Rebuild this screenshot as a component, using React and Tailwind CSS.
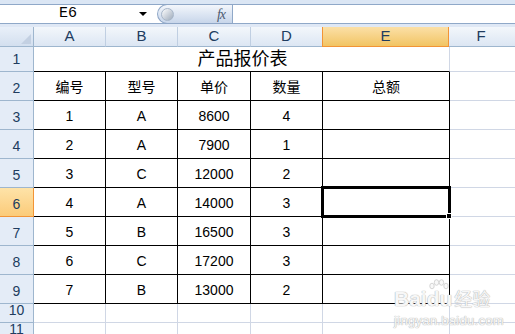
const COLS = [
  {key: 'A', w: 'w-[72px]'},
  {key: 'B', w: 'w-[72px]'},
  {key: 'C', w: 'w-[73px]'},
  {key: 'D', w: 'w-[72px]'},
  {key: 'E', w: 'w-[127px]'},
];

const DATA = [
  ['编号', '型号', '单价', '数量', '总额'],
  ['1', 'A', '8600', '4', ''],
  ['2', 'A', '7900', '1', ''],
  ['3', 'C', '12000', '2', ''],
  ['4', 'A', '14000', '3', ''],
  ['5', 'B', '16500', '3', ''],
  ['6', 'C', '17200', '3', ''],
  ['7', 'B', '13000', '2', ''],
];

const RowHeader = ({n, active, h}) => (
  <div
    className={`${h} w-[34px] shrink-0 flex items-end justify-center pb-[1px] border-r border-b text-[14px] text-[#203c5f] ${
      active
        ? 'bg-gradient-to-b from-[#fee3a8] to-[#fbcb79] border-[#f29436]'
        : 'bg-[#e4ecf7] border-[#9eb6ce]'
    }`}
  >
    {n}
  </div>
);

const Paw = () => (
  <svg width="22" height="12" viewBox="0 0 22 12" className="absolute left-[1px] -top-[9px]">
    <g fill="#f8f8f8" stroke="#d0d0d0" strokeWidth="0.9">
      <ellipse cx="4" cy="7" rx="2.2" ry="2.8"/>
      <ellipse cx="8.5" cy="3.5" rx="2.2" ry="2.8"/>
      <ellipse cx="13.5" cy="3.5" rx="2.2" ry="2.8"/>
      <ellipse cx="18" cy="7" rx="2.2" ry="2.8"/>
    </g>
  </svg>
);

export default function App() {
  return (
    <div className="relative w-[515px] h-[334px] overflow-hidden bg-white font-['Liberation_Sans','Noto_Sans_CJK_SC',sans-serif]">
      {/* top strip */}
      <div className="h-[4px] bg-[#dbe6f4]"/>

      {/* formula bar */}
      <div className="h-[20px] flex border-y border-[#8fa8c8] bg-white">
        <div className="w-[157px] shrink-0 flex items-center">
          <span className="w-[136px] text-center text-[15px] text-black font-['Liberation_Mono',monospace]">E6</span>
          <span className="ml-[3px] w-0 h-0 border-x-[4px] border-x-transparent border-t-[4px] border-t-black"/>
        </div>
        <div className="w-[75px] shrink-0 -my-[1px] flex items-center justify-between rounded-l-full border border-r-0 border-[#8ea6c6] bg-gradient-to-b from-[#f3f6fb] via-[#dde6f3] to-[#c8d6ea] pl-[3px] pr-[7px]">
          <span className="w-[13px] h-[13px] rounded-full bg-gradient-to-br from-[#ffffff] to-[#9eabbb] border border-[#a7b6c9]"/>
          <span className="italic text-[14px] text-[#4d5b70] font-['Liberation_Serif',serif] tracking-[-1px]">fx</span>
        </div>
        <div className="flex-1 border-l border-[#8fa8c8]"/>
      </div>

      {/* gap */}
      <div className="h-[3px] bg-[#dfe8f5]"/>

      {/* column header */}
      <div className="flex h-[20px]">
        <div className="relative w-[34px] shrink-0 border-r border-b border-[#9eb6ce] bg-gradient-to-b from-[#e9f0f9] to-[#d3dfef]">
          <span className="absolute right-[2px] bottom-[2px] w-0 h-0 border-l-[10px] border-l-transparent border-b-[10px] border-b-[#c3d0e2]"/>
        </div>
        {COLS.map(c => (
          <div
            key={c.key}
            className={`${c.w} shrink-0 flex items-center justify-center border-r border-b text-[15px] text-[#203c5f] ${
              c.key === 'E'
                ? 'bg-gradient-to-b from-[#fbe0a6] to-[#f2c462] border-[#f29436] border-l border-l-[#f29436] -ml-[1px]'
                : 'bg-gradient-to-b from-[#f3f7fb] to-[#dce6f3] border-[#c0cfe2] border-b-[#9eb6ce]'
            }`}
          >
            {c.key}
          </div>
        ))}
        <div className="flex-1 flex items-center justify-center pr-[2px] border-b border-[#9eb6ce] bg-gradient-to-b from-[#f3f7fb] to-[#dce6f3] text-[15px] text-[#203c5f]">
          F
        </div>
      </div>

      {/* row 1: merged title */}
      <div className="flex h-[25px]">
        <RowHeader n={1} h="h-[25px]"/>
        <div className="w-[416px] shrink-0 flex items-center justify-center border-r border-r-[#d0d7e5] border-b border-b-black text-[18px] text-black pl-[2px] pt-[1px]">
          产品报价表
        </div>
        <div className="flex-1 border-b border-[#d0d7e5]"/>
      </div>

      {/* rows 2-9 */}
      {DATA.map((row, i) => {
        const rowNo = i + 2;
        const active = rowNo === 6;
        return (
          <div key={rowNo} className="flex h-[29px]">
            <RowHeader n={rowNo} active={active} h="h-[29px]"/>
            {COLS.map((c, j) => (
              <div
                key={c.key}
                className={`${c.w} relative shrink-0 flex items-center justify-center pt-[2px] border-r border-b border-black text-[14px] text-black`}
              >
                {row[j]}
                {active && c.key === 'E' && (
                  <>
                    <div className="absolute -left-[2px] -top-[2px] w-[130px] h-[32px] border-[3px] border-double border-black z-10"/>
                    <div className="absolute -right-[3px] -bottom-[3px] w-[6px] h-[6px] bg-black border border-white z-20"/>
                  </>
                )}
              </div>
            ))}
            <div className="flex-1 border-b border-[#d0d7e5]"/>
          </div>
        );
      })}

      {/* rows 10, 11 */}
      {[10, 11].map(n => (
        <div key={n} className="flex h-[19px]">
          <RowHeader n={n} h="h-[19px]"/>
          {COLS.map(c => (
            <div key={c.key} className={`${c.w} shrink-0 border-r border-b border-[#d0d7e5]`}/>
          ))}
          <div className="flex-1 border-b border-[#d0d7e5]"/>
        </div>
      ))}

      {/* watermark */}
      <div className="absolute left-[394px] top-[287px] z-30 flex flex-col items-start text-[#f7f7f7] [text-shadow:0_0_1px_#b0b0b0,0_0_1px_#b0b0b0] pointer-events-none">
        <div className="flex items-end h-[22px] leading-none">
          <span className="text-[21px] font-bold">Bai</span>
          <span className="relative text-[21px] font-bold">
            <Paw/>
            du
          </span>
          <span className="text-[18px] ml-[2px]">经验</span>
        </div>
        <div className="text-[13px] leading-none mt-[5px] tracking-[0.3px]">jingyan.baidu.com</div>
      </div>
    </div>
  );
}
